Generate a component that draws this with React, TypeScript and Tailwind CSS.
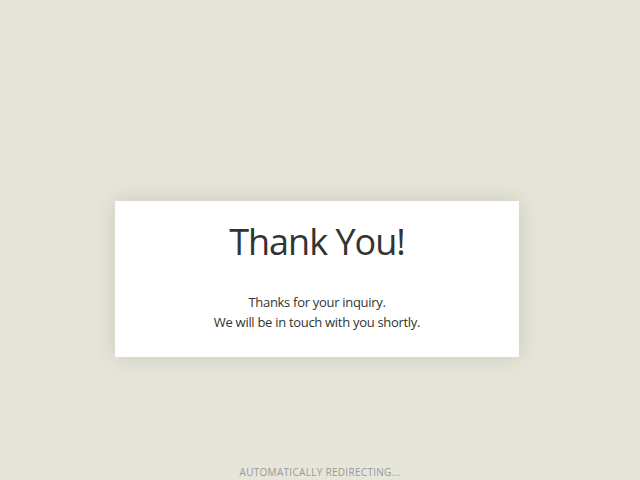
export default function App() {
  return (
    <div className="flex h-[480px] w-[640px] flex-col bg-[#e6e5da] font-['Open_Sans',sans-serif] text-[#333]">
      <div className="ml-[115px] mt-[201px] flex h-[156px] w-[404px] flex-col items-center bg-white shadow-[0_0_20px_rgba(150,150,120,0.35)]">
        <h1 className="mt-[19px] text-[36px] leading-[44px] tracking-[-1px]">Thank You!</h1>
        <p className="mt-[28px] text-center text-[13px] leading-[20px] tracking-[-0.3px]">
          Thanks for your inquiry.
          <br />
          We will be in touch with you shortly.
        </p>
      </div>
      <p className="mt-auto mb-[1px] text-center text-[10px] leading-[14px] tracking-[0.3px] text-[#999] uppercase">
        Automatically redirecting...
      </p>
    </div>
  )
}
